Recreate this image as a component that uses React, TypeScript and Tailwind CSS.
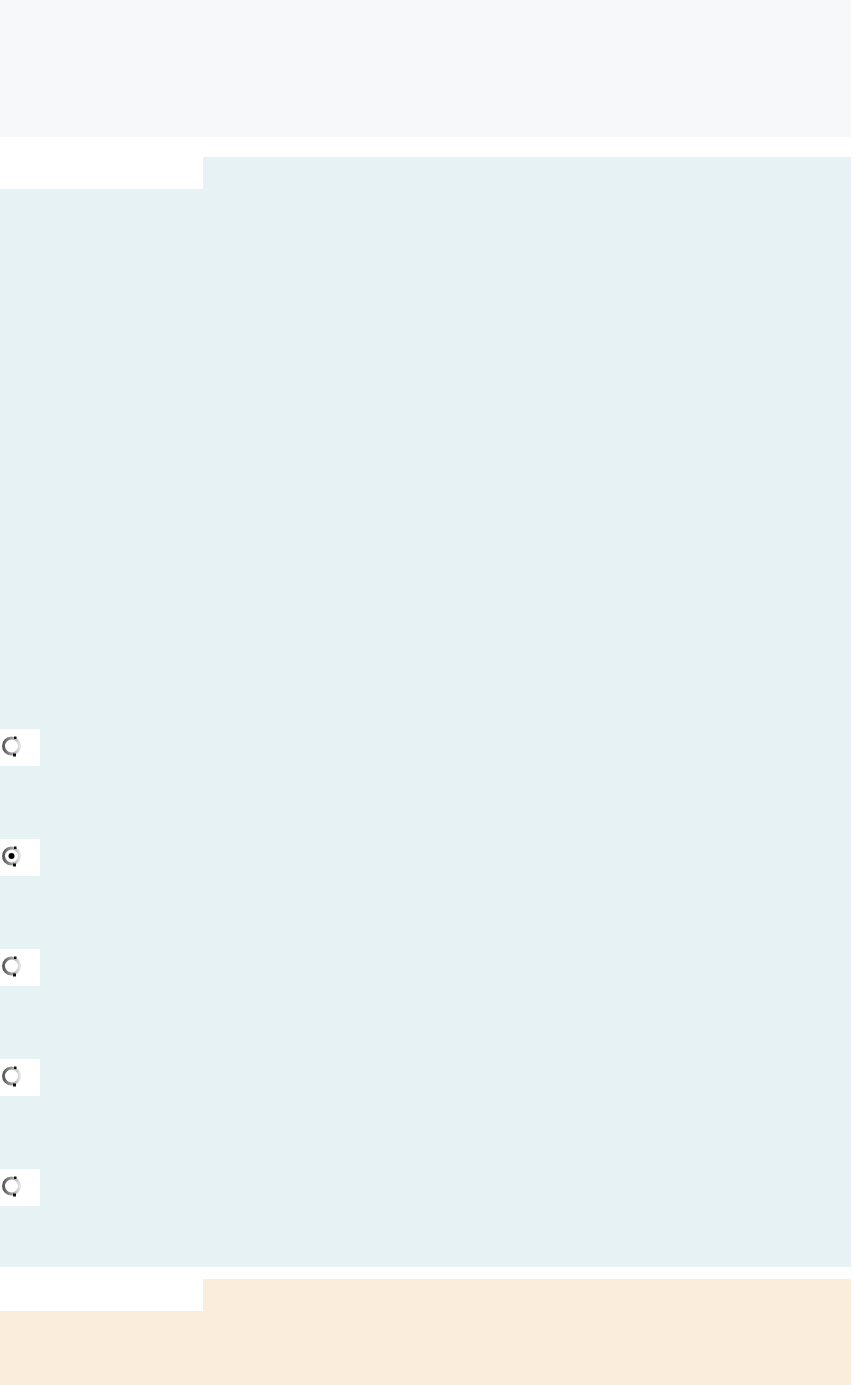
import React from 'react';

const RadioMark: React.FC<{ checked?: boolean }> = ({ checked }) => (
  <svg width="22" height="24" viewBox="0 0 22 24" className="block">
    <defs>
      <linearGradient id="ring" x1="0" y1="0" x2="1" y2="0">
        <stop offset="0" stopColor="#5a5a5a" />
        <stop offset="0.5" stopColor="#9c9c9c" />
        <stop offset="1" stopColor="#e2e2e2" />
      </linearGradient>
    </defs>
    <circle cx="10.5" cy="12" r="8" fill="#ffffff" stroke="url(#ring)" strokeWidth="3" />
    <rect x="13" y="2.5" width="2.5" height="2.5" fill="#111" />
    <rect x="12" y="19.5" width="3" height="3" fill="#111" />
    {checked && <circle cx="10.5" cy="12" r="3" fill="#000" />}
  </svg>
);

const RadioRow: React.FC<{ checked?: boolean }> = ({ checked }) => (
  <div className="w-[40px] h-[37px] bg-white pl-[1px] pt-[5px]">
    <RadioMark checked={checked} />
  </div>
);

export default function App() {
  const options = [false, true, false, false, false];

  return (
    <div className="w-[852px] min-h-[1385px] bg-white flex flex-col">
      <div className="w-[851px] h-[137px] bg-[#f7f8fa]" />

      <div className="w-[851px] mt-[20px] bg-[#e6f2f4] flex flex-col pb-[61px]">
        <div className="w-[203px] h-[32px] bg-white" />
        <div className="mt-[540px] flex flex-col gap-[73px]">
          {options.map((checked, i) => (
            <RadioRow key={i} checked={checked} />
          ))}
        </div>
      </div>

      <div className="w-[851px] mt-[12px] flex-1 bg-[#faeddb] flex flex-col">
        <div className="w-[203px] h-[32px] bg-white" />
      </div>
    </div>
  );
}
